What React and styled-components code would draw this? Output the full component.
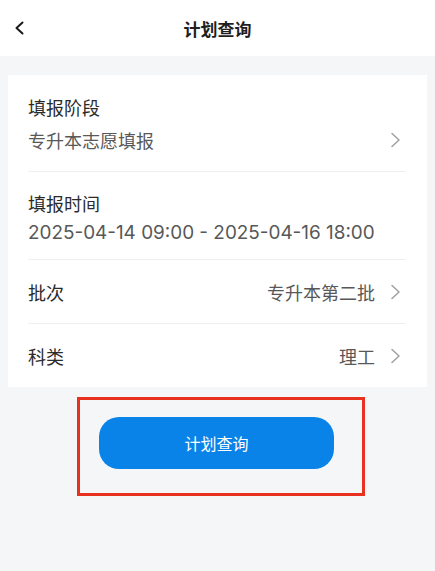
import React from "react";
import styled, { createGlobalStyle } from "styled-components";

const Global = createGlobalStyle`
  html, body { margin: 0; padding: 0; background: #f5f6f8; }
  body { font-family: "Noto Sans CJK SC", "Noto Sans", sans-serif; -webkit-font-smoothing: antialiased; }
  * { box-sizing: border-box; }
`;

const Page = styled.div`
  width: 435px;
  min-height: 571px;
  background: #f5f6f8;
`;

const Header = styled.header`
  height: 56px;
  background: #fff;
  display: flex;
  align-items: center;
  justify-content: center;
  position: relative;
`;

const Back = styled.button`
  position: absolute;
  left: 10px;
  top: 18px;
  width: 18px;
  height: 20px;
  padding: 0;
  border: 0;
  background: none;
  display: flex;
  align-items: center;
  justify-content: center;
`;

const Title = styled.h1`
  margin: 0;
  font-size: 17px;
  font-weight: 700;
  color: #1f1f1f;
  line-height: 24px;
  padding-top: 2px;
`;

const Main = styled.main`
  padding: 19px 8px 0;
`;

const Card = styled.section`
  background: #fff;
  padding: 0 21px 0 20px;
`;

const Row = styled.div`
  display: flex;
  flex-direction: ${(p) => (p.$stacked ? "column" : "row")};
  align-items: ${(p) => (p.$stacked ? "stretch" : "center")};
  justify-content: space-between;
  gap: ${(p) => p.$gap || 0}px;
  padding: ${(p) => p.$pad || "0"};
  height: ${(p) => (p.$h ? `${p.$h}px` : "auto")};
  border-bottom: ${(p) => (p.$last ? "none" : "1px solid #efefef")};
  box-sizing: content-box;
`;

const Label = styled.div`
  font-size: 18px;
  line-height: 26px;
  color: #2b2b2b;
`;

const ValueLine = styled.div`
  display: flex;
  align-items: center;
  justify-content: space-between;
  font-size: 18px;
  line-height: 26px;
  color: #585858;
`;

const Value = styled.span`
  font-size: 18px;
  line-height: 26px;
  color: #585858;
`;

const DateText = styled.span`
  font-family: "Inter", "Noto Sans CJK SC", sans-serif;
  font-size: 18.9px;
  line-height: 26px;
  color: #585858;
`;

const Right = styled.div`
  display: flex;
  align-items: center;
  gap: 15px;
`;

const ChevronWrap = styled.span`
  display: inline-flex;
  margin-right: 5px;
`;

const Highlight = styled.div`
  margin: 10px 0 0 69px;
  width: 288px;
  border: 3px solid #e8321f;
  padding: 17px 28px 24px 19px;
`;

const PrimaryButton = styled.button`
  width: 235px;
  height: 52px;
  border: 0;
  border-radius: 20px;
  background: #0a83e9;
  color: #fff;
  font-family: inherit;
  font-size: 16px;
  display: flex;
  align-items: center;
  justify-content: center;
`;

const Chevron = () => (
  <ChevronWrap>
    <svg width="11" height="16" viewBox="0 0 11 16" fill="none">
      <path d="M2 1.5 L9 8 L2 14.5" stroke="#a0a0a0" strokeWidth="1.5" strokeLinecap="round" strokeLinejoin="round" />
    </svg>
  </ChevronWrap>
);

export default function App() {
  return (
    <Page>
      <Global />
      <Header>
        <Back aria-label="返回">
          <svg width="10" height="14" viewBox="0 0 10 14" fill="none">
            <path d="M8.5 1.5 L2.5 7 L8.5 12.5" stroke="#1a1a1a" strokeWidth="2" strokeLinecap="round" strokeLinejoin="round" />
          </svg>
        </Back>
        <Title>计划查询</Title>
      </Header>
      <Main>
        <Card>
          <Row $stacked $gap={7} $pad="19px 0 18px">
            <Label>填报阶段</Label>
            <ValueLine>
              <span>专升本志愿填报</span>
              <Chevron />
            </ValueLine>
          </Row>
          <Row $stacked $gap={4} $pad="18px 0 13px">
            <Label>填报时间</Label>
            <DateText>2025-04-14 09:00 - 2025-04-16 18:00</DateText>
          </Row>
          <Row $h={63}>
            <Label>批次</Label>
            <Right>
              <Value>专升本第二批</Value>
              <Chevron />
            </Right>
          </Row>
          <Row $h={63} $last>
            <Label>科类</Label>
            <Right>
              <Value>理工</Value>
              <Chevron />
            </Right>
          </Row>
        </Card>
        <Highlight>
          <PrimaryButton>计划查询</PrimaryButton>
        </Highlight>
      </Main>
    </Page>
  );
}
